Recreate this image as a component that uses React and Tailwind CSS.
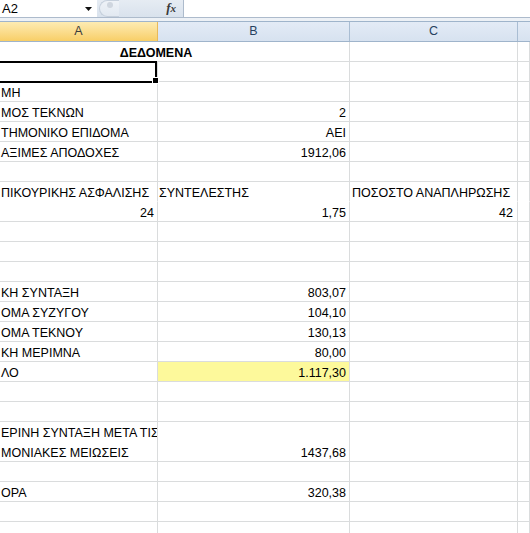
import React from "react";

const rows = [
  { merged: "ΔΕΔΟΜΕΝΑ" },
  {},
  { a: "ΜΗ" },
  { a: "ΜΟΣ ΤΕΚΝΩΝ", b: "2" },
  { a: "ΤΗΜΟΝΙΚΟ ΕΠΙΔΟΜΑ", b: "ΑΕΙ" },
  { a: "ΑΞΙΜΕΣ ΑΠΟΔΟΧΕΣ", b: "1912,06" },
  {},
  { a: "ΠΙΚΟΥΡΙΚΗΣ ΑΣΦΑΛΙΣΗΣ", b: "ΣΥΝΤΕΛΕΣΤΗΣ", bLeft: true, c: "ΠΟΣΟΣΤΟ ΑΝΑΠΛΗΡΩΣΗΣ", noBottom: true },
  { a: "24", aRight: true, b: "1,75", c: "42" },
  {},
  {},
  {},
  { a: "ΚΗ ΣΥΝΤΑΞΗ", b: "803,07" },
  { a: "ΟΜΑ ΣΥΖΥΓΟΥ", b: "104,10" },
  { a: "ΟΜΑ ΤΕΚΝΟΥ", b: "130,13" },
  { a: "ΚΗ ΜΕΡΙΜΝΑ", b: "80,00" },
  { a: "ΛΟ", b: "1.117,30", yellow: true },
  {},
  {},
  { tall: true, a1: "ΕΡΙΝΗ ΣΥΝΤΑΞΗ ΜΕΤΑ ΤΙΣ", a2: "ΜΟΝΙΑΚΕΣ ΜΕΙΩΣΕΙΣ", b: "1437,68" },
  {},
  { a: "ΟΡΑ", b: "320,38" },
  {},
  {},
];

function Row({ r }) {
  const bb = r.noBottom ? "border-b-white" : "border-b-[#dadcdd]";
  const base = `border-r border-r-[#dadcdd] border-b ${bb} flex items-end overflow-hidden whitespace-nowrap leading-[15px]`;
  if (r.merged) {
    return (
      <div className="grid grid-cols-[350px_168px_1fr] h-[20px]">
        <div className={`${base} justify-center pr-[37px] font-bold`}>{r.merged}</div>
        <div className={base}></div>
        <div className={base}></div>
      </div>
    );
  }
  if (r.tall) {
    return (
      <div className="grid grid-cols-[158px_192px_168px_1fr] h-[40px]">
        <div className={`border-r border-r-[#dadcdd] border-b border-b-[#dadcdd] whitespace-nowrap overflow-hidden pl-[1px] pt-[1px] leading-[20px]`}>
          <div>{r.a1}</div>
          <div>{r.a2}</div>
        </div>
        <div className={`${base} justify-end pr-[3px]`}>{r.b}</div>
        <div className={base}></div>
        <div className={base}></div>
      </div>
    );
  }
  return (
    <div className="grid grid-cols-[158px_192px_168px_1fr] h-[20px]">
      <div className={`${base} ${r.aRight ? "justify-end pr-[3px]" : "pl-[1px]"}`}>{r.a}</div>
      <div className={`${base} ${r.bLeft ? "pl-[1px]" : "justify-end pr-[3px]"} ${r.yellow ? "bg-[#fdf99b]" : ""}`}>{r.b}</div>
      <div className={`${base} ${r.c && r.c.length > 4 ? "pl-[2px]" : "justify-end pr-[4px]"}`}>{r.c}</div>
      <div className={base}></div>
    </div>
  );
}

export default function App() {
  return (
    <div className="w-[530px] h-[533px] overflow-hidden bg-white text-black text-[12.5px] font-['Liberation_Sans','Noto_Sans',sans-serif]">
      {/* formula bar */}
      <div className="flex h-[18px] border-b border-[#adbbcc]">
        <div className="w-[97px] flex items-center justify-between pl-[2px] pr-[5px] text-[13px] bg-white">
          <span className="leading-none">A2</span>
          <svg width="7" height="4" viewBox="0 0 7 4">
            <path d="M0 0h7L3.5 4z" fill="#111" />
          </svg>
        </div>
        <div className="w-[86px] bg-gradient-to-b from-[#e6ecf3] to-[#d9e2ed] flex items-stretch">
          <div className="ml-[2px] w-[20px] rounded-l-full bg-gradient-to-b from-[#eef2f7] to-[#e2e9f1] border border-r-0 border-[#c6d0dc] flex items-start pl-[7px] pt-[1px]">
            <div className="w-[6px] h-[6px] rounded-full bg-[#cfd6df]" />
          </div>
          <span className="ml-auto mr-[7px] font-['Liberation_Serif',serif] italic font-bold text-[13px] text-[#3a3a3a] leading-[16px]">
            f<span className="text-[11px]">x</span>
          </span>
        </div>
        <div className="flex-1 bg-white border-l border-[#adbbcc]" />
      </div>
      <div className="h-[3px] bg-[#edf1f6]" />
      {/* column headers */}
      <div className="grid grid-cols-[158px_192px_168px_1fr] h-[21px] border-t border-b border-[#9fb4cb] text-[12.5px] leading-[19px]">
        <div className="bg-gradient-to-b from-[#fdebb2] to-[#f8cf66] border-r border-[#e8b95a] text-center text-[#3c3c3c]">A</div>
        <div className="bg-gradient-to-b from-[#e3ebf6] to-[#d7e2f0] border-r border-[#a9bdd3] text-center text-[#27415f]">B</div>
        <div className="bg-gradient-to-b from-[#e3ebf6] to-[#d7e2f0] border-r border-[#a9bdd3] text-center text-[#27415f]">C</div>
        <div className="bg-gradient-to-b from-[#e3ebf6] to-[#d7e2f0]"></div>
      </div>
      {/* grid */}
      <div className="relative">
        {rows.map((r, i) => (
          <Row key={i} r={r} />
        ))}
        {/* selection */}
        <div className="absolute left-[-3px] top-[19px] w-[160px] h-[22px] border-2 border-black pointer-events-none" />
        <div className="absolute left-[152px] top-[35px] w-[7px] h-[7px] bg-black border border-white" />
      </div>
    </div>
  );
}
